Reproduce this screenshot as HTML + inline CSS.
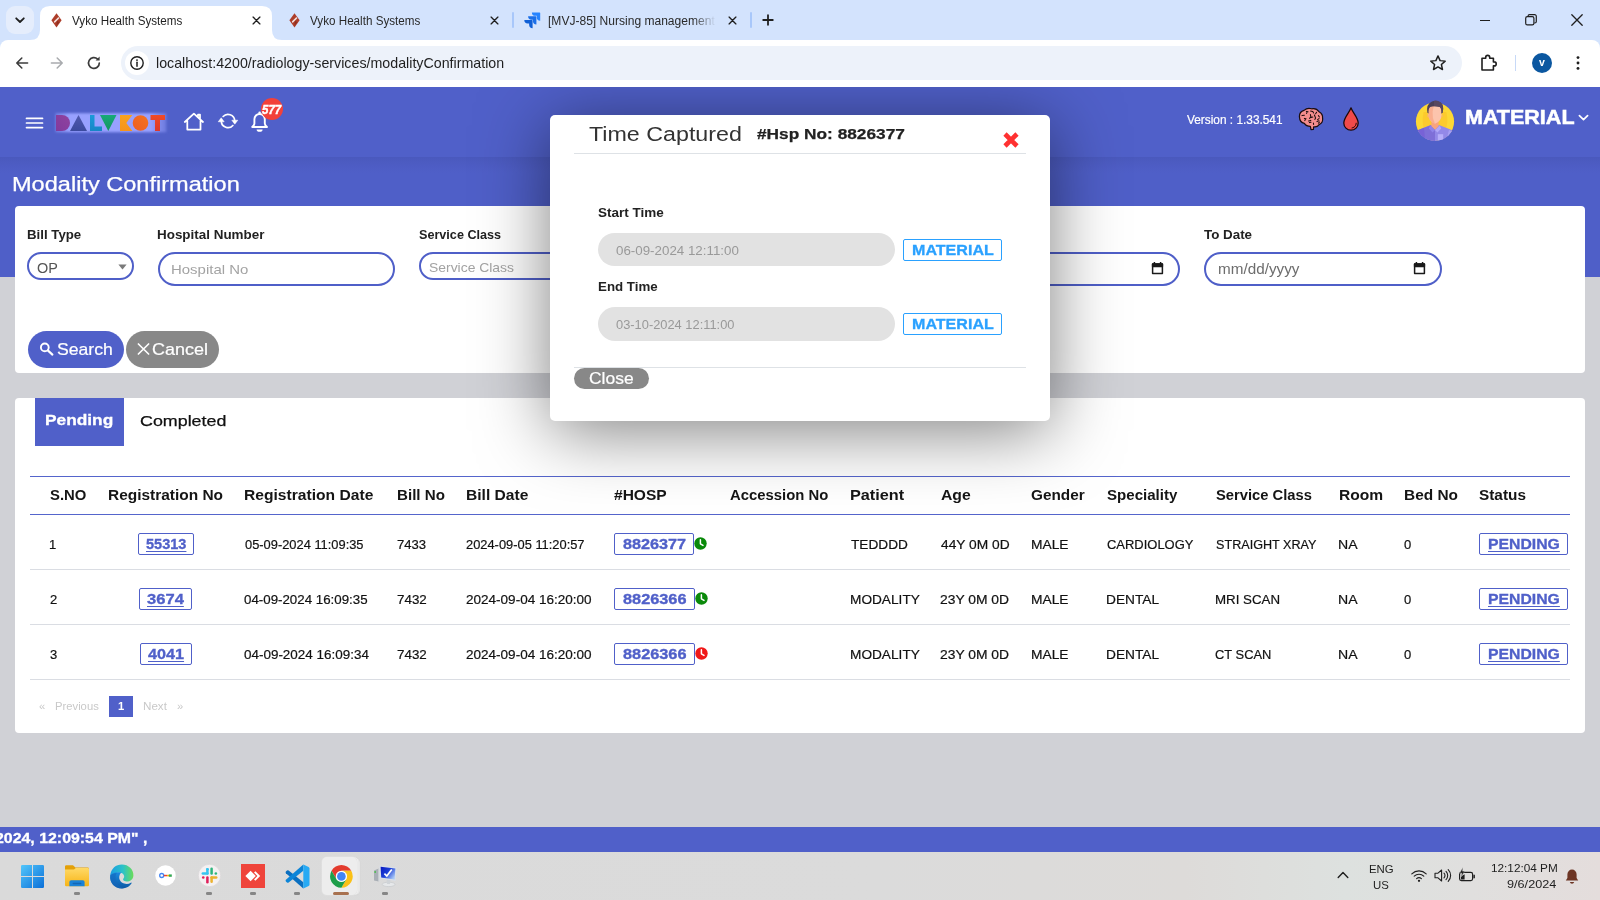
<!DOCTYPE html>
<html>
<head>
<meta charset="utf-8">
<title>Vyko Health Systems</title>
<style>
*{box-sizing:border-box;margin:0;padding:0}
html,body{width:1600px;height:900px;overflow:hidden}
body{font-family:"Liberation Sans",sans-serif;background:#d0d1d6;position:relative;color:#1f1f1f}
.abs{position:absolute}
svg{display:block;overflow:visible}
.t{position:absolute;white-space:pre;font-family:"Liberation Sans",sans-serif;transform-origin:0 0}
#tabstrip{position:absolute;left:0;top:0;width:1600px;height:50px;background:#d3e3fd;z-index:10;overflow:hidden}
#toolbar{position:absolute;left:0;top:40px;width:1600px;height:47px;background:#fff;z-index:11;border-radius:8px 8px 0 0}
#tabsearch{position:absolute;left:6px;top:6px;width:28px;height:28px;border-radius:9px;background:#e5edfc}
#urlbar{position:absolute;left:121px;top:6px;width:1341px;height:34px;border-radius:17px;background:#edf2fa}
#urlinfo{position:absolute;left:4px;top:5px;width:24px;height:24px;border-radius:12px;background:#fff}
#app{position:absolute;left:0;top:87px;width:1600px;height:740px;overflow:hidden;background:#d0d1d6}
#apphead{position:absolute;left:0;top:0;width:1600px;height:70px;background:#5060c9}
#band{position:absolute;left:0;top:70px;width:1600px;height:120px;background:linear-gradient(#4a59bd 0,#4e5dc5 10px,#4f5fc8 16px)}
.card{position:absolute;background:#fff;border-radius:4px}
.inp{position:absolute;border:2px solid #4f5fc8;border-radius:17px;background:#fff}
.box{position:absolute;border:1px solid #5060c9;border-radius:2px;background:#fff}
.mbadge{position:absolute;width:99px;height:22px;border:1.3px solid #2aa1ff;border-radius:2px;background:#fff}
#modal{position:absolute;background:#fff;border-radius:5px;box-shadow:0 10px 70px rgba(0,0,0,.5)}
#ticker{position:absolute;left:0;top:827px;width:1600px;height:25px;background:#5060c9}
#taskbar{position:absolute;left:0;top:852px;width:1600px;height:48px;background:linear-gradient(90deg,#dadada 0%,#dbdbdb 55%,#dddbd9 74%,#dde1df 84%,#e0dfde 92%,#e4dddc 100%)}

</style>
</head>
<body>
<!-- ============ BROWSER CHROME ============ -->
<div id="tabstrip">
<div id="tabsearch"><svg width="28" height="28" viewBox="0 0 28 28"><path d="M10.2 12.3 L14 16 L17.8 12.3" fill="none" stroke="#1f1f1f" stroke-width="1.8" stroke-linecap="round" stroke-linejoin="round"/></svg></div>
<svg class="abs" style="left:30px;top:6px" width="252" height="34" viewBox="0 0 252 34"><path d="M0 34 Q10 34 10 24 L10 10 Q10 0 20 0 L232 0 Q242 0 242 10 L242 24 Q242 34 252 34 Z" fill="#fff"/></svg>
<svg class="abs" style="left:50.5px;top:12.5px" width="11" height="15" viewBox="0 0 11 15"><path d="M5.5 0.3 L10.6 7.2 L5.5 14.6 L0.4 7.2 Z" fill="#ad3d29"/><path d="M7.4 3.9 L2.8 8.5 L3.6 9.9 L8.4 5.2 Z" fill="#fff" opacity=".85"/><path d="M6 7.6 L8.2 9.2 L5.5 13 Z" fill="#8f2f1f"/></svg>
<svg class="abs" style="left:289px;top:12.5px" width="11" height="15" viewBox="0 0 11 15"><path d="M5.5 0.3 L10.6 7.2 L5.5 14.6 L0.4 7.2 Z" fill="#ad3d29"/><path d="M7.4 3.9 L2.8 8.5 L3.6 9.9 L8.4 5.2 Z" fill="#fff" opacity=".85"/><path d="M6 7.6 L8.2 9.2 L5.5 13 Z" fill="#8f2f1f"/></svg>
<svg class="abs" style="left:524px;top:12px" width="16" height="16" viewBox="0 0 16 16"><path d="M15.6 0.4 H7.9 a3.45 3.45 0 0 0 3.45 3.45 h1.4 v1.35 a3.45 3.45 0 0 0 3.45 3.45 V1 a.6.6 0 0 0 -.6 -.6z" fill="#2684ff"/><path d="M11.8 4.2 H4.1 a3.45 3.45 0 0 0 3.45 3.45 h1.4 V9 a3.45 3.45 0 0 0 3.45 3.45 V4.8 a.6.6 0 0 0 -.6 -.6z" fill="#1b6fe8"/><path d="M8 8 H0.3 a3.45 3.45 0 0 0 3.45 3.45 h1.4 v1.35 A3.45 3.45 0 0 0 8.6 16.2 V8.6 A.6.6 0 0 0 8 8z" fill="#0f5fd6"/></svg>
<span class="t" style="left:72.00px;top:15.00px;font-size:12.3px;line-height:12.3px;color:#1f1f1f;transform:scaleX(0.9476);">Vyko Health Systems</span>
<span class="t" style="left:310.30px;top:15.00px;font-size:12.3px;line-height:12.3px;color:#2a2a2a;transform:scaleX(0.9476);">Vyko Health Systems</span>
<div class="abs" style="left:548px;top:8px;width:168px;height:24px;overflow:hidden;-webkit-mask-image:linear-gradient(90deg,#000 86%,transparent 100%)">
<span class="t" style="left:-0.18px;top:7.00px;font-size:12.3px;line-height:12.3px;color:#2a2a2a;transform:scaleX(0.9799);">[MVJ-85] Nursing management</span>
</div>
<svg class="abs" style="left:251.5px;top:15.5px" width="9" height="9" viewBox="0 0 9 9"><path d="M1.1 1.1 L7.9 7.9 M7.9 1.1 L1.1 7.9" stroke="#1f1f1f" stroke-width="1.35" stroke-linecap="round"/></svg>
<svg class="abs" style="left:489.5px;top:15.5px" width="9" height="9" viewBox="0 0 9 9"><path d="M1.1 1.1 L7.9 7.9 M7.9 1.1 L1.1 7.9" stroke="#1f1f1f" stroke-width="1.35" stroke-linecap="round"/></svg>
<svg class="abs" style="left:727.5px;top:15.5px" width="9" height="9" viewBox="0 0 9 9"><path d="M1.1 1.1 L7.9 7.9 M7.9 1.1 L1.1 7.9" stroke="#1f1f1f" stroke-width="1.35" stroke-linecap="round"/></svg>
<div class="abs" style="left:512px;top:12px;width:2px;height:16px;border-radius:1px;background:#a8c7fa"></div>
<div class="abs" style="left:750px;top:12px;width:2px;height:16px;border-radius:1px;background:#a8c7fa"></div>
<svg class="abs" style="left:761px;top:13px" width="14" height="14" viewBox="0 0 14 14"><path d="M7 2.2 V11.8 M2.2 7 H11.8" stroke="#1f1f1f" stroke-width="1.8" stroke-linecap="round"/></svg>
<div class="abs" style="left:1480px;top:20px;width:10px;height:1.3px;background:#1f1f1f"></div>
<svg class="abs" style="left:1525px;top:14px" width="12" height="12" viewBox="0 0 12 12"><rect x="0.7" y="2.7" width="8.2" height="8.2" rx="1.6" fill="none" stroke="#1f1f1f" stroke-width="1.2"/><path d="M3 2.6 V2.2 A1.6 1.6 0 0 1 4.6 0.7 H9.6 A1.7 1.7 0 0 1 11.3 2.4 V7.4 A1.6 1.6 0 0 1 9.8 9 H9.2" fill="none" stroke="#1f1f1f" stroke-width="1.2"/></svg>
<svg class="abs" style="left:1571px;top:14px" width="12" height="12" viewBox="0 0 12 12"><path d="M0.8 0.8 L11.2 11.2 M11.2 0.8 L0.8 11.2" stroke="#1f1f1f" stroke-width="1.3" stroke-linecap="round"/></svg>
</div>
<div id="toolbar">
<svg class="abs" style="left:14px;top:15px" width="16" height="16" viewBox="0 0 16 16"><path d="M13.6 8 H3.2 M7.8 3 L2.8 8 L7.8 13" fill="none" stroke="#3c3c3c" stroke-width="1.55" stroke-linecap="round" stroke-linejoin="round"/></svg>
<svg class="abs" style="left:49px;top:15px" width="16" height="16" viewBox="0 0 16 16"><path d="M2.4 8 H12.8 M8.2 3 L13.2 8 L8.2 13" fill="none" stroke="#a9abae" stroke-width="1.55" stroke-linecap="round" stroke-linejoin="round"/></svg>
<svg class="abs" style="left:86px;top:15px" width="16" height="16" viewBox="0 0 16 16"><path d="M13.3 8 A5.4 5.4 0 1 1 11.6 4.1" fill="none" stroke="#3c3c3c" stroke-width="1.7" stroke-linecap="round"/><path d="M13.6 1.6 V5.6 H9.6 Z" fill="#3c3c3c"/></svg>
<div id="urlbar"><div id="urlinfo"><svg width="24" height="24" viewBox="1 1 24 24"><circle cx="13" cy="13" r="6.2" fill="none" stroke="#1f1f1f" stroke-width="1.4"/><circle cx="13" cy="10.1" r=".95" fill="#1f1f1f"/><path d="M13 12.3 V16.3" stroke="#1f1f1f" stroke-width="1.5" stroke-linecap="round"/></svg></div></div>
<span class="t" style="left:156.10px;top:16.00px;font-size:14.3px;line-height:14.3px;color:#1f1f1f;transform:scaleX(0.9958);">localhost:4200/radiology-services/modalityConfirmation</span>
<svg class="abs" style="left:1429px;top:14px" width="18" height="18" viewBox="0 0 18 18"><path d="M9 1.9 L11.1 6.6 L16.2 7.1 L12.4 10.5 L13.5 15.5 L9 12.9 L4.5 15.5 L5.6 10.5 L1.8 7.1 L6.9 6.6 Z" fill="none" stroke="#1f1f1f" stroke-width="1.45" stroke-linejoin="round"/></svg>
<svg class="abs" style="left:1479px;top:13px" width="19" height="20" viewBox="0 0 19 20"><path d="M3 5.2 H6.7 V4.4 A2 2 0 0 1 10.7 4.4 V5.2 H14.4 V8.9 H15.2 A2 2 0 0 1 15.2 12.9 H14.4 V17 H3 Z" fill="none" stroke="#1f1f1f" stroke-width="1.6" stroke-linejoin="round"/></svg>
<div class="abs" style="left:1514.5px;top:15px;width:1.5px;height:16px;background:#c7d9f7"></div>
<div class="abs" style="left:1532px;top:13px;width:20px;height:20px;border-radius:10px;background:#0b57a0"></div>
<span class="t" style="left:1539.20px;top:17.00px;font-size:10.5px;line-height:10.5px;color:#fff;font-weight:bold;transform:scaleX(1.0020);">v</span>
<svg class="abs" style="left:1575px;top:15px" width="6" height="16" viewBox="0 0 6 16"><circle cx="3" cy="2.6" r="1.45" fill="#1f1f1f"/><circle cx="3" cy="8" r="1.45" fill="#1f1f1f"/><circle cx="3" cy="13.4" r="1.45" fill="#1f1f1f"/></svg>
</div>
<!-- ============ APP ============ -->
<div id="app">
<div id="apphead"></div><div id="band"></div>
<svg class="abs" style="left:26px;top:30px" width="17" height="12" viewBox="0 0 17 12"><path d="M0.5 1.4 H16.5 M0.5 6 H16.5 M0.5 10.6 H16.5" stroke="#fff" stroke-width="1.7" stroke-linecap="round"/></svg>
<svg class="abs" style="left:52px;top:23px" width="118" height="26" viewBox="0 0 118 26">
<defs><filter id="lg" x="-10%" y="-30%" width="120%" height="160%"><feGaussianBlur stdDeviation="1.1"/></filter>
<linearGradient id="gB" x1="0" y1="0" x2="1" y2="0"><stop offset="0" stop-color="#8d98f6" stop-opacity=".55"/><stop offset=".12" stop-color="#98a1ff"/><stop offset=".86" stop-color="#98a1ff"/><stop offset="1" stop-color="#8d98f6" stop-opacity=".45"/></linearGradient>
<linearGradient id="gD" x1="1" y1="0" x2="0" y2="1"><stop offset="0" stop-color="#8f429f"/><stop offset="1" stop-color="#823a9c"/></linearGradient>
<linearGradient id="gA" x1="0" y1="0" x2="0" y2="1"><stop offset="0" stop-color="#5059ad"/><stop offset="1" stop-color="#3b4a9e"/></linearGradient>
<linearGradient id="gK" x1="0" y1="0" x2="0" y2="1"><stop offset="0" stop-color="#f9a21e"/><stop offset="1" stop-color="#f6931c"/></linearGradient>
<linearGradient id="gO" x1="1" y1="0" x2="0" y2="1"><stop offset="0" stop-color="#f4731f"/><stop offset="1" stop-color="#ee5d26"/></linearGradient>
<linearGradient id="gT" x1="0" y1="0" x2="0" y2="1"><stop offset="0" stop-color="#f04a25"/><stop offset="1" stop-color="#dc382c"/></linearGradient>
<linearGradient id="gL" x1="0" y1="0" x2="0" y2="1"><stop offset="0" stop-color="#1a9ad8"/><stop offset="1" stop-color="#1786c6"/></linearGradient>
<linearGradient id="gV" x1="0" y1="0" x2="0" y2="1"><stop offset="0" stop-color="#17aa78"/><stop offset="1" stop-color="#13945f"/></linearGradient></defs>
<rect x="3.4" y="3.2" width="111" height="19" fill="url(#gB)" filter="url(#lg)"/>
<path d="M4 5 H10 A8 8 0 0 1 10 21 H4 Z" fill="url(#gD)"/>
<path d="M26.5 5 L35 21 H18 Z" fill="url(#gA)"/>
<path d="M38 5 H42.5 V16.5 H50 V21 H38 Z" fill="url(#gL)"/>
<path d="M48 5 H64.5 L56.3 21 Z" fill="url(#gV)"/>
<path d="M68 5 H80.4 L74.3 13 L80.4 21 H68 Z" fill="url(#gK)"/>
<circle cx="88.5" cy="13" r="7.8" fill="url(#gO)"/>
<path d="M98.5 5 H113 V10 H108 V21 H103 V10 H98.5 Z" fill="url(#gT)"/>
</svg>
<svg class="abs" style="left:183px;top:25px" width="22" height="20" viewBox="0 0 22 20"><path d="M1.8 10 L10.9 1.7 L20 10 M4.3 8.6 V17.6 H17.5 V8.6 M15 4.6 V2.6 H17 V7" fill="none" stroke="#fff" stroke-width="1.75" stroke-linejoin="round" stroke-linecap="round"/></svg>
<svg class="abs" style="left:217px;top:23.299999999999997px" width="22" height="22" viewBox="0 0 22 22"><path d="M6.1 6.5 A6.7 6.7 0 0 1 17.7 10.6 M15.9 15.5 A6.7 6.7 0 0 1 4.3 11.4" fill="none" stroke="#fff" stroke-width="1.7" stroke-linecap="round"/><path d="M14.8 10.2 H20.8 L17.8 14.2 Z M1.2 11.8 H7.2 L4.2 7.8 Z" fill="#fff" stroke="#fff" stroke-width=".5" stroke-linejoin="round"/></svg>
<svg class="abs" style="left:250px;top:24px" width="20" height="22" viewBox="0 0 20 22"><path d="M9.6 3 A5.2 5.2 0 0 0 4.4 8.2 V12.6 Q4.4 14.2 2.2 16 H17 Q14.8 14.2 14.8 12.6 V8.2 A5.2 5.2 0 0 0 9.6 3 Z" fill="none" stroke="#fff" stroke-width="1.9" stroke-linejoin="round"/><circle cx="9.6" cy="1.9" r="1.3" fill="#fff"/><path d="M6.6 18.4 A3 2.4 0 0 0 12.6 18.4 Z" fill="#fff"/></svg>
<div class="abs" style="left:261px;top:11px;width:22px;height:22px;border-radius:11px;background:#f2413a"></div>
<span class="t" style="left:261.91px;top:17.00px;font-size:12.6px;line-height:12.6px;color:#fff;font-weight:bold;font-style:italic;transform:scaleX(0.9106);-webkit-text-stroke:.4px #fff;">577</span>
<span class="t" style="left:1187.00px;top:27.00px;font-size:12.8px;line-height:12.8px;color:#fff;transform:scaleX(0.9262);-webkit-text-stroke:.2px #fff;">Version : 1.33.541</span>
<svg class="abs" style="left:1298px;top:20px" width="26" height="24" viewBox="0 0 26 24">
<path d="M1.4 9.6 C1.4 6 3.6 4 6 3.4 C8 1.6 11 1 13.6 1.8 C16.6 1.2 19.6 2.6 21 4.8 C23.4 6 24.8 8.6 24.6 11.4 C25 14 23.6 16.4 21.4 17.4 C20 19.4 17.6 20.2 15.6 19.8 L15.4 22.4 L13 22.6 L12.4 19.4 C10 19.4 7.6 18.4 6.4 16.4 C3.8 16 1.6 13.6 1.4 9.6 Z" fill="#f58e8e" stroke="#1c0c0c" stroke-width="1.2" stroke-linejoin="round"/>
<path d="M4 8.6 L6.4 8.2 M8.4 4.4 L10 4.8 M9 5.2 L8.6 6.4 M12.6 4 L14.6 4.4 M14.8 4.6 L15.6 6 M18.6 5.2 L17.6 6.8 M12.4 7.6 L13 10.4 L14.8 10 M12.8 9.8 L11.6 11.4 M16.4 8 L17.4 10.6 M17.6 11 L16.8 12.4 M20.4 8.6 L21.4 10 M21 11.6 L19.6 12.6 M6.4 11.4 L8 11.8 M7.4 12.4 L6.8 13.6 M10.6 14 L12.8 13.4 M11.4 15.6 L13 15.2 M19 14.6 L21 13.8 M21.6 15 L20.4 16.2 M15.4 16 L15.6 17.4" fill="none" stroke="#1c0c0c" stroke-width="1.05" stroke-linecap="round" stroke-linejoin="round"/></svg>
<svg class="abs" style="left:1342px;top:19px" width="18" height="26" viewBox="0 0 18 26"><path d="M9 1.8 C7.6 6.4 1.8 11.6 1.8 17 A7.2 7.2 0 0 0 16.2 17 C16.2 11.6 10.4 6.4 9 1.8 Z" fill="#f04a4a" stroke="#1c0808" stroke-width="1.25" stroke-linejoin="round"/><path d="M14.2 17.2 A5 5 0 0 1 9.4 22" fill="none" stroke="#1c0808" stroke-width="1" stroke-linecap="round" stroke-dasharray="1.6 .9"/></svg>
<svg class="abs" style="left:1415px;top:13px" width="40" height="42" viewBox="0 0 40 42">
<defs><clipPath id="avc"><circle cx="20" cy="21.6" r="19.3"/></clipPath></defs>
<circle cx="20" cy="21.6" r="19.1" fill="#fdd835"/>
<g clip-path="url(#avc)">
<path d="M8.6 12 Q6.4 22 9.4 30 L30.6 30 Q33.6 22 31.4 12 Z" fill="#fbc72b" opacity=".75"/>
<path d="M0 44 V32.6 Q3 29.6 9 27.8 L15.4 25.2 H24.6 L31 27.8 Q37 29.6 40 32.6 V44 Z" fill="#9389e8"/>
<path d="M0 44 V32.6 Q3 29.6 9 27.8 L15.4 25.2 L20 29.6 V44 Z" fill="#7e6fd8"/>
<path d="M0 44 V32.6 Q3 29.6 9 27.8 L10.4 44 Z" fill="#7358d6" opacity=".55"/>
<path d="M34 30 Q38 31.4 40 33 V44 H31.6 Q32 36 34 30 Z" fill="#ada5f6" opacity=".8"/>
<rect x="22.8" y="34.2" width="5.4" height="6.2" fill="#b6aefa"/>
<path d="M15.2 25.4 L20 30 L17.6 32.4 L13.8 28.6 Z" fill="#8f84ea"/><path d="M24.8 25.4 L20 30 L22.4 32.4 L26.2 28.6 Z" fill="#b0a8f8"/></g>
<path d="M16.4 20.6 H23.6 V26.2 L20 29.8 L16.4 26.2 Z" fill="#f8a47e"/>
<path d="M13.6 9.4 Q13.2 4.4 20 4.4 Q26.8 4.4 26.4 9.4 L26.6 14.8 Q26.4 21.6 20 23.8 Q13.6 21.6 13.4 14.8 Z" fill="#fcc4ad"/>
<path d="M20 4.4 Q13.2 4.4 13.6 9.4 L13.4 14.8 Q13.6 21.6 20 23.8 Q17 18 17.6 12 Q17.8 7.6 20 4.4 Z" fill="#f8a98a" opacity=".8"/>
<path d="M12.6 14 Q12.2 14.6 12.6 17 L13.6 17.4 Z M27.4 14 Q27.8 14.6 27.4 17 L26.4 17.4 Z" fill="#f8a98a"/>
<path d="M12.4 12.8 Q10.8 4 17 1.4 Q21.6 -0.2 25.4 2.2 Q29.6 5 27.6 12.8 L26.4 13.4 Q26.8 8.6 24.8 7 Q19.4 5.4 15.2 7 Q13.2 8.6 13.6 13.4 Z" fill="#4a3f58"/>
<path d="M19 .8 Q21.6 -0.2 25.4 2.2 Q29.6 5 27.6 12.8 L26.4 13.4 Q26.8 8.6 24.8 7 Q21.6 6 19 6.2 Z" fill="#5b4a63" opacity=".8"/>
</svg>
<span class="t" style="left:1464.57px;top:21.00px;font-size:19.6px;line-height:19.6px;color:#fff;font-weight:bold;transform:scaleX(1.0978);-webkit-text-stroke:.5px #fff;">MATERIAL</span>
<svg class="abs" style="left:1578px;top:26.5px" width="11" height="8" viewBox="0 0 11 8"><path d="M1.4 1.6 L5.5 5.6 L9.6 1.6" fill="none" stroke="#fff" stroke-width="1.7" stroke-linecap="round" stroke-linejoin="round"/></svg>
<span class="t" style="left:11.88px;top:88.00px;font-size:19.6px;line-height:19.6px;color:#fff;transform:scaleX(1.2022);-webkit-text-stroke:.25px #fff;">Modality Confirmation</span>
<div class="card" style="left:15px;top:119px;width:1570px;height:167px"></div>
<span class="t" style="left:26.56px;top:142.00px;font-size:12.6px;line-height:12.6px;color:#222;font-weight:bold;transform:scaleX(1.0523);">Bill Type</span>
<span class="t" style="left:157.35px;top:142.00px;font-size:12.6px;line-height:12.6px;color:#222;font-weight:bold;transform:scaleX(1.0660);">Hospital Number</span>
<span class="t" style="left:419.20px;top:142.00px;font-size:12.6px;line-height:12.6px;color:#222;font-weight:bold;transform:scaleX(1.0020);">Service Class</span>
<span class="t" style="left:1204.39px;top:142.00px;font-size:12.6px;line-height:12.6px;color:#222;font-weight:bold;transform:scaleX(1.0612);">To Date</span>
<div class="inp" style="left:27px;top:165px;width:107px;height:28px;border-radius:14px"></div>
<span class="t" style="left:36.88px;top:174.00px;font-size:14px;line-height:14px;color:#555;transform:scaleX(1.0323);">OP</span>
<svg class="abs" style="left:118px;top:176.5px" width="9" height="6" viewBox="0 0 9 6"><path d="M0.4 0.4 H8.6 L4.5 5.4 Z" fill="#7a7a7a"/></svg>
<div class="inp" style="left:158px;top:165px;width:237px;height:34px"></div>
<span class="t" style="left:171.09px;top:176.00px;font-size:13.6px;line-height:13.6px;color:#a3a3a3;transform:scaleX(1.1000);">Hospital No</span>
<div class="inp" style="left:419px;top:165px;width:237px;height:28px;border-radius:14px"></div>
<span class="t" style="left:428.69px;top:174.00px;font-size:13.6px;line-height:13.6px;color:#a3a3a3;transform:scaleX(1.0227);">Service Class</span>
<div class="inp" style="left:943px;top:165px;width:237px;height:34px"></div>
<svg class="abs" style="left:1151px;top:173.5px" width="13" height="14" viewBox="0 0 13 14"><path d="M1.6 3 H11.4 V12.4 H1.6 Z" fill="none" stroke="#1a1a1a" stroke-width="1.5" stroke-linejoin="round"/><path d="M1.6 3 H11.4 V5.6 H1.6 Z M3.4 1 V3.4 M9.6 1 V3.4" fill="#1a1a1a" stroke="#1a1a1a" stroke-width="1.5" stroke-linejoin="round"/></svg>
<div class="inp" style="left:1204px;top:165px;width:238px;height:34px"></div>
<span class="t" style="left:1217.63px;top:175.00px;font-size:14.2px;line-height:14.2px;color:#6d6d6d;transform:scaleX(1.0756);">mm/dd/yyyy</span>
<svg class="abs" style="left:1413px;top:173.5px" width="13" height="14" viewBox="0 0 13 14"><path d="M1.6 3 H11.4 V12.4 H1.6 Z" fill="none" stroke="#1a1a1a" stroke-width="1.5" stroke-linejoin="round"/><path d="M1.6 3 H11.4 V5.6 H1.6 Z M3.4 1 V3.4 M9.6 1 V3.4" fill="#1a1a1a" stroke="#1a1a1a" stroke-width="1.5" stroke-linejoin="round"/></svg>
<div class="abs" style="left:28px;top:244px;width:96px;height:37px;border-radius:18.5px;background:#5060c9"></div>
<svg class="abs" style="left:39px;top:255px" width="15" height="14" viewBox="0 0 15 14"><circle cx="5.8" cy="5.4" r="3.9" fill="none" stroke="#fff" stroke-width="1.9"/><path d="M8.8 8.4 L13.4 12.6" stroke="#fff" stroke-width="2.1" stroke-linecap="round"/></svg>
<span class="t" style="left:56.65px;top:254.00px;font-size:16.4px;line-height:16.4px;color:#fff;transform:scaleX(1.0748);-webkit-text-stroke:.2px #fff;">Search</span>
<div class="abs" style="left:126px;top:244px;width:93px;height:37px;border-radius:18.5px;background:#888"></div>
<svg class="abs" style="left:136.5px;top:256px" width="13" height="12" viewBox="0 0 13 12"><path d="M1.4 1 L11.6 11 M11.6 1 L1.4 11" stroke="#fff" stroke-width="1.7" stroke-linecap="round"/></svg>
<span class="t" style="left:152.12px;top:254.00px;font-size:16.4px;line-height:16.4px;color:#fff;transform:scaleX(1.0974);-webkit-text-stroke:.2px #fff;">Cancel</span>
<div class="card" style="left:15px;top:311px;width:1570px;height:335px"></div>
<div class="abs" style="left:35px;top:311px;width:89px;height:48px;background:#5060c9"></div>
<span class="t" style="left:44.88px;top:325.00px;font-size:15.4px;line-height:15.4px;color:#fff;font-weight:bold;transform:scaleX(1.1237);-webkit-text-stroke:.3px #fff;">Pending</span>
<span class="t" style="left:140.18px;top:326.00px;font-size:15.2px;line-height:15.2px;color:#111;transform:scaleX(1.1760);-webkit-text-stroke:.25px #111;">Completed</span>
<div class="abs" style="left:30px;top:389px;width:1540px;height:1px;background:#5565cc"></div>
<div class="abs" style="left:30px;top:427px;width:1540px;height:1px;background:#5565cc"></div>
<div class="abs" style="left:30px;top:482px;width:1540px;height:1px;background:#dadde3"></div>
<div class="abs" style="left:30px;top:537px;width:1540px;height:1px;background:#dadde3"></div>
<div class="abs" style="left:30px;top:592px;width:1540px;height:1px;background:#dadde3"></div>
<span class="t" style="left:49.78px;top:401.00px;font-size:14.2px;line-height:14.2px;color:#151515;font-weight:bold;transform:scaleX(1.0482);">S.NO</span>
<span class="t" style="left:108.22px;top:401.00px;font-size:14.2px;line-height:14.2px;color:#151515;font-weight:bold;transform:scaleX(1.0887);">Registration No</span>
<span class="t" style="left:244.01px;top:401.00px;font-size:14.2px;line-height:14.2px;color:#151515;font-weight:bold;transform:scaleX(1.1009);">Registration Date</span>
<span class="t" style="left:396.54px;top:401.00px;font-size:14.2px;line-height:14.2px;color:#151515;font-weight:bold;transform:scaleX(1.0667);">Bill No</span>
<span class="t" style="left:465.51px;top:401.00px;font-size:14.2px;line-height:14.2px;color:#151515;font-weight:bold;transform:scaleX(1.0988);">Bill Date</span>
<span class="t" style="left:613.58px;top:401.00px;font-size:14.2px;line-height:14.2px;color:#151515;font-weight:bold;transform:scaleX(1.0955);">#HOSP</span>
<span class="t" style="left:730.19px;top:401.00px;font-size:14.2px;line-height:14.2px;color:#151515;font-weight:bold;transform:scaleX(1.0469);">Accession No</span>
<span class="t" style="left:849.97px;top:401.00px;font-size:14.2px;line-height:14.2px;color:#151515;font-weight:bold;transform:scaleX(1.1444);">Patient</span>
<span class="t" style="left:940.67px;top:401.00px;font-size:14.2px;line-height:14.2px;color:#151515;font-weight:bold;transform:scaleX(1.1099);">Age</span>
<span class="t" style="left:1031.26px;top:401.00px;font-size:14.2px;line-height:14.2px;color:#151515;font-weight:bold;transform:scaleX(1.0797);">Gender</span>
<span class="t" style="left:1107.08px;top:401.00px;font-size:14.2px;line-height:14.2px;color:#151515;font-weight:bold;transform:scaleX(1.0622);">Speciality</span>
<span class="t" style="left:1215.58px;top:401.00px;font-size:14.2px;line-height:14.2px;color:#151515;font-weight:bold;transform:scaleX(1.0386);">Service Class</span>
<span class="t" style="left:1338.51px;top:401.00px;font-size:14.2px;line-height:14.2px;color:#151515;font-weight:bold;transform:scaleX(1.0986);">Room</span>
<span class="t" style="left:1403.52px;top:401.00px;font-size:14.2px;line-height:14.2px;color:#151515;font-weight:bold;transform:scaleX(1.0864);">Bed No</span>
<span class="t" style="left:1478.87px;top:401.00px;font-size:14.2px;line-height:14.2px;color:#151515;font-weight:bold;transform:scaleX(1.0824);">Status</span>
<span class="t" style="left:49.30px;top:451.00px;font-size:13px;line-height:13px;color:#111;transform:scaleX(1.0020);-webkit-text-stroke:.2px #111;">1</span>
<div class="box" style="left:138px;top:446px;width:56px;height:22px"></div>
<span class="t" style="left:145.60px;top:450.00px;font-size:14.6px;line-height:14.6px;color:#5060c9;font-weight:bold;transform:scaleX(0.9955);-webkit-text-stroke:.3px #5060c9;text-decoration:underline;text-decoration-thickness:1.3px;text-underline-offset:2px;">55313</span>
<span class="t" style="left:244.51px;top:451.00px;font-size:13px;line-height:13px;color:#111;transform:scaleX(0.9897);-webkit-text-stroke:.2px #111;">05-09-2024 11:09:35</span>
<span class="t" style="left:396.90px;top:451.00px;font-size:13px;line-height:13px;color:#111;transform:scaleX(1.0076);-webkit-text-stroke:.2px #111;">7433</span>
<span class="t" style="left:465.91px;top:451.00px;font-size:13px;line-height:13px;color:#111;transform:scaleX(0.9897);-webkit-text-stroke:.2px #111;">2024-09-05 11:20:57</span>
<div class="box" style="left:614px;top:446px;width:80px;height:22px"></div>
<span class="t" style="left:622.56px;top:450.00px;font-size:14.8px;line-height:14.8px;color:#5060c9;font-weight:bold;transform:scaleX(1.0957);-webkit-text-stroke:.35px #5060c9;">8826377</span>
<svg class="abs" style="left:694.1px;top:450px" width="13" height="13" viewBox="0 0 13 13"><circle cx="6.5" cy="6.5" r="6.2" fill="#0a8a0a"/><path d="M6.4 2.8 V6.8 L9 8.4" fill="none" stroke="#fff" stroke-width="1.5" stroke-linecap="round" stroke-linejoin="round"/></svg>
<span class="t" style="left:850.79px;top:451.00px;font-size:13px;line-height:13px;color:#111;transform:scaleX(1.0492);-webkit-text-stroke:.2px #111;">TEDDDD</span>
<span class="t" style="left:940.79px;top:451.00px;font-size:13px;line-height:13px;color:#111;transform:scaleX(1.0585);-webkit-text-stroke:.2px #111;">44Y 0M 0D</span>
<span class="t" style="left:1030.74px;top:451.00px;font-size:13px;line-height:13px;color:#111;transform:scaleX(1.0610);-webkit-text-stroke:.2px #111;">MALE</span>
<span class="t" style="left:1106.90px;top:451.00px;font-size:13px;line-height:13px;color:#111;transform:scaleX(0.9964);-webkit-text-stroke:.2px #111;">CARDIOLOGY</span>
<span class="t" style="left:1215.51px;top:451.00px;font-size:13px;line-height:13px;color:#111;transform:scaleX(0.9709);-webkit-text-stroke:.2px #111;">STRAIGHT XRAY</span>
<span class="t" style="left:1338.42px;top:451.00px;font-size:13px;line-height:13px;color:#111;transform:scaleX(1.0826);-webkit-text-stroke:.2px #111;">NA</span>
<span class="t" style="left:1404.00px;top:451.00px;font-size:13px;line-height:13px;color:#111;transform:scaleX(1.0020);-webkit-text-stroke:.2px #111;">0</span>
<div class="box" style="left:1479px;top:446px;width:89px;height:22px"></div>
<span class="t" style="left:1487.73px;top:450.00px;font-size:14.6px;line-height:14.6px;color:#5060c9;font-weight:bold;transform:scaleX(1.0809);-webkit-text-stroke:.3px #5060c9;text-decoration:underline;text-decoration-thickness:1.3px;text-underline-offset:2px;">PENDING</span>
<span class="t" style="left:49.60px;top:506.00px;font-size:13px;line-height:13px;color:#111;transform:scaleX(1.0020);-webkit-text-stroke:.2px #111;">2</span>
<div class="box" style="left:139px;top:501px;width:53px;height:22px"></div>
<span class="t" style="left:146.66px;top:505.00px;font-size:14.6px;line-height:14.6px;color:#5060c9;font-weight:bold;transform:scaleX(1.1350);-webkit-text-stroke:.3px #5060c9;text-decoration:underline;text-decoration-thickness:1.3px;text-underline-offset:2px;">3674</span>
<span class="t" style="left:244.49px;top:506.00px;font-size:13px;line-height:13px;color:#111;transform:scaleX(1.0235);-webkit-text-stroke:.2px #111;">04-09-2024 16:09:35</span>
<span class="t" style="left:396.88px;top:506.00px;font-size:13px;line-height:13px;color:#111;transform:scaleX(1.0293);-webkit-text-stroke:.2px #111;">7432</span>
<span class="t" style="left:465.88px;top:506.00px;font-size:13px;line-height:13px;color:#111;transform:scaleX(1.0402);-webkit-text-stroke:.2px #111;">2024-09-04 16:20:00</span>
<div class="box" style="left:614px;top:501px;width:80.5px;height:22px"></div>
<span class="t" style="left:622.56px;top:505.00px;font-size:14.8px;line-height:14.8px;color:#5060c9;font-weight:bold;transform:scaleX(1.1026);-webkit-text-stroke:.35px #5060c9;">8826366</span>
<svg class="abs" style="left:694.6px;top:505px" width="13" height="13" viewBox="0 0 13 13"><circle cx="6.5" cy="6.5" r="6.2" fill="#0a8a0a"/><path d="M6.4 2.8 V6.8 L9 8.4" fill="none" stroke="#fff" stroke-width="1.5" stroke-linecap="round" stroke-linejoin="round"/></svg>
<span class="t" style="left:849.95px;top:506.00px;font-size:13px;line-height:13px;color:#111;transform:scaleX(1.0509);-webkit-text-stroke:.2px #111;">MODALITY</span>
<span class="t" style="left:940.36px;top:506.00px;font-size:13px;line-height:13px;color:#111;transform:scaleX(1.0651);-webkit-text-stroke:.2px #111;">23Y 0M 0D</span>
<span class="t" style="left:1030.74px;top:506.00px;font-size:13px;line-height:13px;color:#111;transform:scaleX(1.0610);-webkit-text-stroke:.2px #111;">MALE</span>
<span class="t" style="left:1106.45px;top:506.00px;font-size:13px;line-height:13px;color:#111;transform:scaleX(1.0533);-webkit-text-stroke:.2px #111;">DENTAL</span>
<span class="t" style="left:1214.98px;top:506.00px;font-size:13px;line-height:13px;color:#111;transform:scaleX(1.0232);-webkit-text-stroke:.2px #111;">MRI SCAN</span>
<span class="t" style="left:1338.42px;top:506.00px;font-size:13px;line-height:13px;color:#111;transform:scaleX(1.0826);-webkit-text-stroke:.2px #111;">NA</span>
<span class="t" style="left:1404.00px;top:506.00px;font-size:13px;line-height:13px;color:#111;transform:scaleX(1.0020);-webkit-text-stroke:.2px #111;">0</span>
<div class="box" style="left:1479px;top:501px;width:89px;height:22px"></div>
<span class="t" style="left:1487.73px;top:505.00px;font-size:14.6px;line-height:14.6px;color:#5060c9;font-weight:bold;transform:scaleX(1.0809);-webkit-text-stroke:.3px #5060c9;text-decoration:underline;text-decoration-thickness:1.3px;text-underline-offset:2px;">PENDING</span>
<span class="t" style="left:49.80px;top:561.00px;font-size:13px;line-height:13px;color:#111;transform:scaleX(1.0020);-webkit-text-stroke:.2px #111;">3</span>
<div class="box" style="left:140px;top:556px;width:52px;height:22px"></div>
<span class="t" style="left:147.78px;top:560.00px;font-size:14.6px;line-height:14.6px;color:#5060c9;font-weight:bold;transform:scaleX(1.1108);-webkit-text-stroke:.3px #5060c9;text-decoration:underline;text-decoration-thickness:1.3px;text-underline-offset:2px;">4041</span>
<span class="t" style="left:244.48px;top:561.00px;font-size:13px;line-height:13px;color:#111;transform:scaleX(1.0343);-webkit-text-stroke:.2px #111;">04-09-2024 16:09:34</span>
<span class="t" style="left:396.88px;top:561.00px;font-size:13px;line-height:13px;color:#111;transform:scaleX(1.0293);-webkit-text-stroke:.2px #111;">7432</span>
<span class="t" style="left:465.88px;top:561.00px;font-size:13px;line-height:13px;color:#111;transform:scaleX(1.0402);-webkit-text-stroke:.2px #111;">2024-09-04 16:20:00</span>
<div class="box" style="left:614px;top:556px;width:80.5px;height:22px"></div>
<span class="t" style="left:622.56px;top:560.00px;font-size:14.8px;line-height:14.8px;color:#5060c9;font-weight:bold;transform:scaleX(1.1026);-webkit-text-stroke:.35px #5060c9;">8826366</span>
<svg class="abs" style="left:694.6px;top:560px" width="13" height="13" viewBox="0 0 13 13"><circle cx="6.5" cy="6.5" r="6.2" fill="#f01818"/><path d="M6.4 2.8 V6.8 L9 8.4" fill="none" stroke="#fff" stroke-width="1.5" stroke-linecap="round" stroke-linejoin="round"/></svg>
<span class="t" style="left:849.95px;top:561.00px;font-size:13px;line-height:13px;color:#111;transform:scaleX(1.0509);-webkit-text-stroke:.2px #111;">MODALITY</span>
<span class="t" style="left:940.36px;top:561.00px;font-size:13px;line-height:13px;color:#111;transform:scaleX(1.0651);-webkit-text-stroke:.2px #111;">23Y 0M 0D</span>
<span class="t" style="left:1030.74px;top:561.00px;font-size:13px;line-height:13px;color:#111;transform:scaleX(1.0610);-webkit-text-stroke:.2px #111;">MALE</span>
<span class="t" style="left:1106.45px;top:561.00px;font-size:13px;line-height:13px;color:#111;transform:scaleX(1.0533);-webkit-text-stroke:.2px #111;">DENTAL</span>
<span class="t" style="left:1215.41px;top:561.00px;font-size:13px;line-height:13px;color:#111;transform:scaleX(0.9915);-webkit-text-stroke:.2px #111;">CT SCAN</span>
<span class="t" style="left:1338.42px;top:561.00px;font-size:13px;line-height:13px;color:#111;transform:scaleX(1.0826);-webkit-text-stroke:.2px #111;">NA</span>
<span class="t" style="left:1404.00px;top:561.00px;font-size:13px;line-height:13px;color:#111;transform:scaleX(1.0020);-webkit-text-stroke:.2px #111;">0</span>
<div class="box" style="left:1479px;top:556px;width:89px;height:22px"></div>
<span class="t" style="left:1487.73px;top:560.00px;font-size:14.6px;line-height:14.6px;color:#5060c9;font-weight:bold;transform:scaleX(1.0809);-webkit-text-stroke:.3px #5060c9;text-decoration:underline;text-decoration-thickness:1.3px;text-underline-offset:2px;">PENDING</span>
<span class="t" style="left:39.40px;top:614.00px;font-size:11.2px;line-height:11.2px;color:#c9c9c9;transform:scaleX(1.0020);">«</span>
<span class="t" style="left:54.60px;top:614.00px;font-size:11.2px;line-height:11.2px;color:#c9c9c9;transform:scaleX(1.0053);">Previous</span>
<div class="abs" style="left:109px;top:609px;width:24px;height:21px;background:#5060c9"></div>
<span class="t" style="left:117.90px;top:614.00px;font-size:11.2px;line-height:11.2px;color:#fff;font-weight:bold;transform:scaleX(1.0020);">1</span>
<span class="t" style="left:143.26px;top:614.00px;font-size:11.2px;line-height:11.2px;color:#c9c9c9;transform:scaleX(1.0399);">Next</span>
<span class="t" style="left:177.20px;top:614.00px;font-size:11.2px;line-height:11.2px;color:#c9c9c9;transform:scaleX(1.0020);">»</span>
<!-- ============ MODAL ============ -->
<div id="modal" style="left:550px;top:28px;width:500px;height:306px"></div>
<span class="t" style="left:588.53px;top:38.00px;font-size:19.6px;line-height:19.6px;color:#333;transform:scaleX(1.1862);">Time Captured</span>
<span class="t" style="left:756.78px;top:39.00px;font-size:15.4px;line-height:15.4px;color:#222;font-weight:bold;transform:scaleX(1.1225);-webkit-text-stroke:.25px #222;">#Hsp No: 8826377</span>
<svg class="abs" style="left:1002px;top:44px" width="18" height="18" viewBox="0 0 18 18"><path d="M3 3 L15 15 M15 3 L3 15" stroke="#ff3131" stroke-width="4.6" stroke-linecap="butt"/></svg>
<div class="abs" style="left:574px;top:66px;width:452px;height:1.3px;background:#dee2e6"></div>
<span class="t" style="left:597.88px;top:120.00px;font-size:12.6px;line-height:12.6px;color:#222;font-weight:bold;transform:scaleX(1.0712);">Start Time</span>
<div class="abs" style="left:598px;top:146px;width:297px;height:33px;border-radius:16.5px;background:#e2e2e2"></div>
<span class="t" style="left:615.80px;top:157.00px;font-size:13.4px;line-height:13.4px;color:#999;transform:scaleX(0.9961);">06-09-2024 12:11:00</span>
<div class="mbadge" style="left:903px;top:152px"></div>
<span class="t" style="left:911.64px;top:155.00px;font-size:15.2px;line-height:15.2px;color:#2aa1ff;font-weight:bold;transform:scaleX(1.0577);-webkit-text-stroke:.3px #2aa1ff;">MATERIAL</span>
<span class="t" style="left:597.95px;top:194.00px;font-size:12.6px;line-height:12.6px;color:#222;font-weight:bold;transform:scaleX(1.0566);">End Time</span>
<div class="abs" style="left:598px;top:220px;width:297px;height:34px;border-radius:17px;background:#e2e2e2"></div>
<span class="t" style="left:615.82px;top:231.00px;font-size:13.4px;line-height:13.4px;color:#999;transform:scaleX(0.9602);">03-10-2024 12:11:00</span>
<div class="mbadge" style="left:903px;top:226px"></div>
<span class="t" style="left:911.64px;top:229.00px;font-size:15.2px;line-height:15.2px;color:#2aa1ff;font-weight:bold;transform:scaleX(1.0577);-webkit-text-stroke:.3px #2aa1ff;">MATERIAL</span>
<div class="abs" style="left:574px;top:280px;width:452px;height:1.3px;background:#dee2e6"></div>
<div class="abs" style="left:574px;top:281px;width:75px;height:21px;border-radius:10.5px;background:#888"></div>
<span class="t" style="left:589.33px;top:284.00px;font-size:16px;line-height:16px;color:#fff;transform:scaleX(1.0912);-webkit-text-stroke:.2px #fff;">Close</span>
</div>
<!-- ============ TICKER + TASKBAR ============ -->
<div id="ticker"></div>
<span class="t" style="left:-4.96px;top:832.00px;font-size:13.8px;line-height:13.8px;color:#fff;font-weight:bold;transform:scaleX(1.1516);-webkit-text-stroke:.3px #fff;">2024, 12:09:54 PM&quot; ,</span>
<div id="taskbar">
<svg class="abs" style="left:21px;top:13px" width="23" height="23" viewBox="0 0 23 23"><defs><linearGradient id="wg" x1="0" y1="0" x2="1" y2="1"><stop offset="0" stop-color="#52c6fb"/><stop offset="1" stop-color="#0b6fd8"/></linearGradient></defs>
<path d="M0 1.2 A1.2 1.2 0 0 1 1.2 0 H11 V11 H0 Z M12 0 H21.8 A1.2 1.2 0 0 1 23 1.2 V11 H12 Z M0 12 H11 V23 H1.2 A1.2 1.2 0 0 1 0 21.8 Z M12 12 H23 V21.8 A1.2 1.2 0 0 1 21.8 23 H12 Z" fill="url(#wg)"/></svg>
<svg class="abs" style="left:65px;top:13px" width="24" height="22" viewBox="0 0 24 22"><defs><linearGradient id="fg" x1="0" y1="0" x2="0" y2="1"><stop offset="0" stop-color="#ffd966"/><stop offset="1" stop-color="#f7b416"/></linearGradient></defs>
<path d="M0 1.6 A1.4 1.4 0 0 1 1.4 0.2 H8 L10.4 2.6 H22.6 A1.4 1.4 0 0 1 24 4 V6 H0 Z" fill="#e3a008"/>
<path d="M0 4.6 H9 L10.8 3 H22.8 A1.2 1.2 0 0 1 24 4.2 V20 A1.2 1.2 0 0 1 22.8 21.2 H1.2 A1.2 1.2 0 0 1 0 20 Z" fill="url(#fg)"/>
<path d="M4.4 21.2 V17 A1.8 1.8 0 0 1 6.2 15.2 H17.8 A1.8 1.8 0 0 1 19.6 17 V21.2 Z" fill="#1a83d8"/><rect x="7.6" y="17.8" width="8.8" height="1.4" rx=".7" fill="#1366b4"/></svg>
<svg class="abs" style="left:108.5px;top:11.5px" width="25" height="25" viewBox="0 0 25 25"><defs><linearGradient id="eg1" x1="0" y1="0" x2="1" y2="0"><stop offset="0" stop-color="#1b9de2"/><stop offset=".55" stop-color="#2bc2c8"/><stop offset="1" stop-color="#6bdc57"/></linearGradient>
<linearGradient id="eg2" x1="0" y1="0" x2="0" y2="1"><stop offset="0" stop-color="#1a8ae0"/><stop offset="1" stop-color="#0c59a4"/></linearGradient></defs>
<path d="M1.2 11.4 C2 4.6 7 .6 12.8 .6 C19.6 .6 24.6 5.6 24.4 11.4 C24.2 15.4 21 17.4 17.6 17.4 C14.4 17.4 13.6 15.8 14.4 14.6 C15 13.6 15.4 12.6 15 11.4 C14.4 9.4 12.4 8.4 10.4 8.4 C6 8.4 2.2 11 1.2 11.4 Z" fill="url(#eg1)"/>
<path d="M1.2 11.4 C.2 18.8 6 24.6 13 24.4 C17.4 24.4 20.8 22.2 22.6 19.2 C22.8 18.6 22.2 18.4 21.8 18.8 C20 20 17.6 20.4 15.2 19.6 C11 18.2 9.4 14.4 10.6 11.2 C11 10 11.8 9 12.6 8.6 C8 7.6 2.4 9.4 1.2 11.4 Z" fill="url(#eg2)"/>
<path d="M6.6 12.8 C6.2 17.8 9.4 22.6 15 24.2 C10 25.4 3.4 22.6 1.6 16 C1.2 14.4 1 12.8 1.2 11.4 C3 9.8 5.4 9 7.8 9 C7 10 6.6 11.4 6.6 12.8 Z" fill="#1467bd" opacity=".6"/></svg>
<svg class="abs" style="left:154.5px;top:13px" width="21" height="21" viewBox="0 0 21 21"><circle cx="10.5" cy="10.5" r="10.2" fill="#fff"/><circle cx="6.7" cy="10.5" r="2" fill="none" stroke="#4285f4" stroke-width="1.3"/><rect x="8.8" y="9.8" width="3.4" height="1.5" fill="#ea4335"/><rect x="12" y="9.8" width="2" height="1.5" fill="#fbbc04"/><rect x="13.8" y="9.4" width="3" height="2.4" fill="#34a853"/></svg>
<svg class="abs" style="left:197.5px;top:12px" width="23" height="23" viewBox="0 0 23 23"><circle cx="11.5" cy="11.5" r="11.2" fill="#f4f1f2" stroke="#d5d2d4" stroke-width=".6"/>
<g stroke-linecap="round" stroke-width="2.5" fill="none"><path d="M9.4 5.2 V9.6" stroke="#36c5f0"/><path d="M4.8 9.6 H9.4" stroke="#36c5f0"/><path d="M13.6 4.8 V9.4" stroke="#2eb67d"/><path d="M17.8 9.4 H17.9" stroke="#2eb67d"/>
<path d="M13.6 17.8 V13.4" stroke="#ecb22e"/><path d="M18.2 13.4 H13.6" stroke="#ecb22e"/><path d="M9.4 18.2 V13.6" stroke="#e01e5a"/><path d="M5.2 13.6 H5.3" stroke="#e01e5a"/><path d="M9.4 5.2 H9.5" stroke="#36c5f0"/></g></svg>
<svg class="abs" style="left:241px;top:12px" width="24" height="24" viewBox="0 0 24 24"><rect width="24" height="24" fill="#ef443b"/><path d="M9.6 6.8 L14.8 12 L9.6 17.2 L4.4 12 Z" fill="#fff"/><path d="M14.4 7.2 L19.2 12 L14.4 16.8 L13 15.4 L16.4 12 L13 8.6 Z" fill="#fff"/></svg>
<svg class="abs" style="left:284.5px;top:11.5px" width="25" height="25" viewBox="0 0 25 25">
<path d="M18.3 24.5 L18.3 18.2 L3.6 6.6 Q2.8 6 2 6.6 L0.9 7.6 Q0.2 8.4 0.9 9.2 Z" fill="#0a6fc0"/>
<path d="M18.3 0.5 L18.3 6.8 L3.6 18.4 Q2.8 19 2 18.4 L0.9 17.4 Q0.2 16.6 0.9 15.8 Z" fill="#0c85d8"/>
<path d="M18.3 0.5 L23.6 3 Q24.5 3.5 24.5 4.5 V20.5 Q24.5 21.5 23.6 22 L18.3 24.5 Z" fill="#27aaf4"/></svg>
<div class="abs" style="left:330px;top:6px;width:30px;height:36.5px;border-radius:5px;background:#e7e7e7;box-shadow:0 0 0 .5px #d6d6d6"></div>
<div class="abs" style="left:322px;top:5px;width:34.5px;height:38.3px;border-radius:5px;background:#ededed;box-shadow:0 0 0 .6px #e2e2e2, 1.2px 0 0 #f4f4f4"></div>
<svg class="abs" style="left:328.6px;top:11.600000000000023px" width="24.8" height="24.8" viewBox="0 0 48 48">
<path d="M4.95 13 A22 22 0 0 1 43.05 13 L24 13 A11 11 0 0 0 14.47 29.5 Z" fill="#e33b2e"/>
<path d="M43.05 13 A22 22 0 0 1 24 46 L33.53 29.5 A11 11 0 0 0 24 13 Z" fill="#fbc116"/>
<path d="M24 46 A22 22 0 0 1 4.95 13 L14.47 29.5 A11 11 0 0 0 33.53 29.5 Z" fill="#1e9e4a"/>
<circle cx="24" cy="24" r="10.6" fill="#fff"/><circle cx="24" cy="24" r="8.4" fill="#4285f4"/></svg>
<div class="abs" style="left:333px;top:39.5px;width:16px;height:3px;border-radius:1.5px;background:#a8714f"></div>
<svg class="abs" style="left:373px;top:12px" width="25" height="24" viewBox="0 0 25 24"><defs><linearGradient id="rg" x1="0" y1="0" x2="1" y2=".7"><stop offset="0" stop-color="#0a18c0"/><stop offset=".5" stop-color="#1c3fd6"/><stop offset="1" stop-color="#a9c8f6"/></linearGradient></defs>
<path d="M1 6.4 L5.6 4.6 V17.6 L1 16.4 Z" fill="#a9afb6"/><path d="M5.6 4.6 L7 5.2 V17 L5.6 17.6 Z" fill="#d6dade"/><rect x="1.5" y="7" width="1.3" height="2" fill="#46c046"/>
<ellipse cx="15.6" cy="20.4" rx="6.4" ry="2.2" fill="#e6e8ea" stroke="#c2c6ca" stroke-width=".6"/><path d="M13.6 15 H17.4 L17 20 H14 Z" fill="#d0d4d8"/>
<path d="M6.4 1.6 L23.6 3.4 L22.6 17 L7 14.4 Z" fill="#d9dfe8"/><path d="M7.6 2.8 L22.4 4.4 L21.6 15.6 L8.2 13.4 Z" fill="url(#rg)"/>
<path d="M11.4 9.6 L13.8 12 L18.8 5.4" fill="none" stroke="#fff" stroke-width="1.7"/></svg>
<div class="abs" style="left:74px;top:40px;width:6px;height:2.6px;border-radius:1.3px;background:#868686"></div>
<div class="abs" style="left:206px;top:40px;width:6px;height:2.6px;border-radius:1.3px;background:#868686"></div>
<div class="abs" style="left:250px;top:40px;width:6px;height:2.6px;border-radius:1.3px;background:#868686"></div>
<div class="abs" style="left:294px;top:40px;width:6px;height:2.6px;border-radius:1.3px;background:#868686"></div>
<div class="abs" style="left:382px;top:40px;width:6px;height:2.6px;border-radius:1.3px;background:#868686"></div>
<svg class="abs" style="left:1337px;top:19px" width="12" height="8" viewBox="0 0 12 8"><path d="M1.2 6.6 L6 1.6 L10.8 6.6" fill="none" stroke="#1f1f1f" stroke-width="1.4" stroke-linecap="round" stroke-linejoin="round"/></svg>
<span class="t" style="left:1368.63px;top:12.00px;font-size:11.8px;line-height:11.8px;color:#1f1f1f;transform:scaleX(0.9667);">ENG</span>
<span class="t" style="left:1373.13px;top:28.00px;font-size:11.8px;line-height:11.8px;color:#1f1f1f;transform:scaleX(0.9653);">US</span>
<svg class="abs" style="left:1411px;top:16.5px" width="16" height="14" viewBox="0 0 16 14"><g fill="none" stroke="#1f1f1f" stroke-width="1.15" stroke-linecap="round"><path d="M0.8 4.8 A10.4 10.4 0 0 1 15.2 4.8"/><path d="M3.2 7.2 A7 7 0 0 1 12.8 7.2"/><path d="M5.6 9.6 A3.6 3.6 0 0 1 10.4 9.6"/></g><circle cx="8" cy="11.8" r="1.15" fill="#1f1f1f"/></svg>
<svg class="abs" style="left:1434px;top:16px" width="18" height="15" viewBox="0 0 18 15"><path d="M1 5.2 H4 L7.6 2 V13 L4 9.8 H1 Z" fill="none" stroke="#1f1f1f" stroke-width="1.1" stroke-linejoin="round"/><g fill="none" stroke="#1f1f1f" stroke-width="1.1" stroke-linecap="round"><path d="M10 5.2 A3.2 3.2 0 0 1 10 9.8"/><path d="M12 3.4 A5.8 5.8 0 0 1 12 11.6"/><path d="M14.2 1.6 A8.4 8.4 0 0 1 14.2 13.4"/></g></svg>
<svg class="abs" style="left:1458px;top:15px" width="18" height="16" viewBox="0 0 18 16"><rect x="1.6" y="5.4" width="13" height="8.2" rx="1.8" fill="none" stroke="#1f1f1f" stroke-width="1.2"/><path d="M15.4 7.8 H16.9 V11.2 H15.4 Z" fill="#1f1f1f"/><path d="M3 12.4 V9.4 L6.6 7.2 V12.4 Z" fill="#1f1f1f"/><path d="M4.8 0.6 L1.6 6.2 H3.9 L3 10 L6.8 4.2 H4.5 Z" fill="#1f1f1f" stroke="#dddddd" stroke-width=".35"/></svg>
<span class="t" style="left:1490.70px;top:11.00px;font-size:11.8px;line-height:11.8px;color:#1f1f1f;transform:scaleX(0.9972);">12:12:04 PM</span>
<span class="t" style="left:1507.46px;top:27.00px;font-size:11.8px;line-height:11.8px;color:#1f1f1f;transform:scaleX(1.0737);">9/6/2024</span>
<svg class="abs" style="left:1565px;top:16.5px" width="14" height="16" viewBox="0 0 14 16"><path d="M7 .6 A4.6 4.6 0 0 0 2.4 5.2 V9 L.8 11.6 H13.2 L11.6 9 V5.2 A4.6 4.6 0 0 0 7 .6 Z" fill="#6d3524"/><path d="M4.8 13 A2.3 2.3 0 0 0 9.2 13 Z" fill="#6d3524"/></svg>
</div>
</body>
</html>
